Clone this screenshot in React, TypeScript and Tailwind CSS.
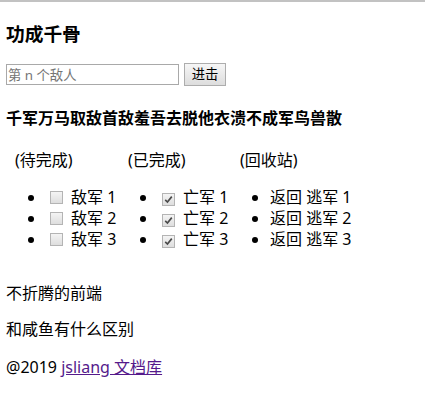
const todo = ['敌军 1', '敌军 2', '敌军 3']
const done = ['亡军 1', '亡军 2', '亡军 3']
const bin = ['逃军 1', '逃军 2', '逃军 3']

const Box = ({ checked }: { checked?: boolean }) => (
  <span className="mr-[8px] ml-[4px] inline-flex h-[13px] w-[13px] items-center justify-center border border-[#b4b4b4] bg-gradient-to-b from-[#f4f4f4] to-[#dedede] align-[-1px]">
    {checked && (
      <svg viewBox="0 0 11 11" className="h-[9px] w-[9px]">
        <path d="M1.5 6 L4.2 8.6 L9.5 2" fill="none" stroke="#4a4a4a" strokeWidth="2" />
      </svg>
    )}
  </span>
)

export default function App() {
  return (
    <div className="min-h-[408px] bg-white text-[16px] text-black [font-family:'Noto_Sans','Noto_Sans_CJK_SC',sans-serif]">
      <div className="h-[2px] bg-[#c2c2c2]" />
      <div className="px-[6px]">
        <h3 className="mt-[20px] text-[18.72px] leading-[24px] font-bold">功成千骨</h3>
        <div className="mt-[17px] flex items-center gap-[5px]">
          <input
            placeholder="第 n 个敌人"
            className="h-[21px] w-[173px] border border-[#a9a9a9] px-[1px] text-[13.33px] leading-[19px] outline-none placeholder:text-[#757575]"
          />
          <button className="h-[23px] w-[42px] border border-[#adadad] bg-gradient-to-b from-[#f6f6f6] to-[#dddddd] text-[13.33px] leading-[21px]">
            进击
          </button>
        </div>
        <h4 className="mt-[22px] text-[16px] leading-[21px] font-bold">千军万马取敌首敌羞吾去脱他衣溃不成军鸟兽散</h4>
        <div className="mt-[21px] grid grid-cols-[112px_112px_auto] leading-[21px]">
          <div>
            <div className="pl-[9px]">(待完成)</div>
            <ul className="mt-[16px] list-disc pl-[40px]">
              {todo.map((t) => (
                <li key={t}>
                  <Box />
                  {t}
                </li>
              ))}
            </ul>
          </div>
          <div>
            <div className="pl-[10px]">(已完成)</div>
            <ul className="mt-[16px] list-disc pl-[40px]">
              {done.map((t) => (
                <li key={t}>
                  <Box checked />
                  {t}
                </li>
              ))}
            </ul>
          </div>
          <div>
            <div className="pl-[10px]">(回收站)</div>
            <ul className="mt-[16px] list-disc pl-[40px] whitespace-nowrap">
              {bin.map((t) => (
                <li key={t}>返回 {t}</li>
              ))}
            </ul>
          </div>
        </div>
        <p className="mt-[33px] leading-[21px]">不折腾的前端</p>
        <p className="mt-[15px] leading-[21px]">和咸鱼有什么区别</p>
        <p className="mt-[17px] leading-[21px]">
          @2019{' '}
          <a href="#" className="text-[#551a8b] underline">
            jsliang 文档库
          </a>
        </p>
      </div>
    </div>
  )
}
